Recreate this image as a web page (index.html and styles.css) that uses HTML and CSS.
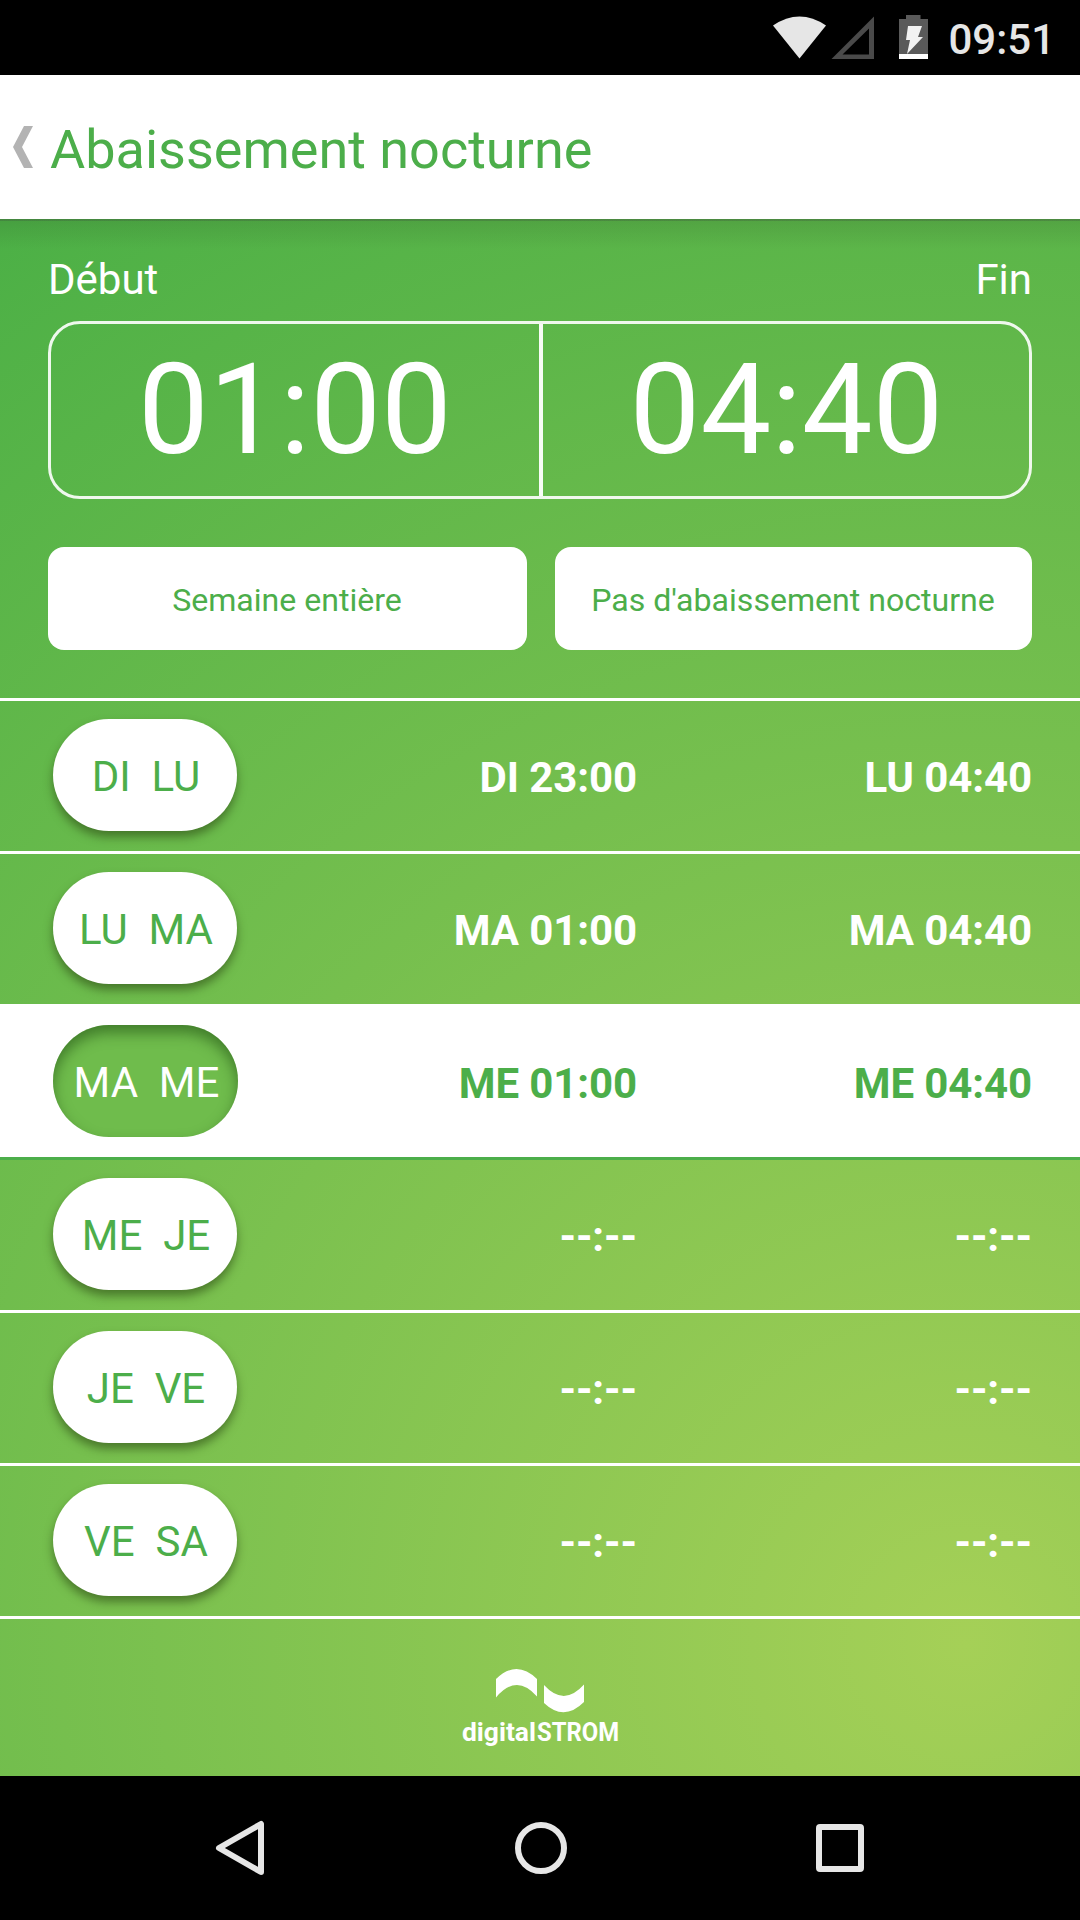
FILE: index.html
```html
<!DOCTYPE html>
<html lang="fr">
<head>
<meta charset="utf-8">
<title>Abaissement nocturne</title>
<link rel="stylesheet" href="styles.css">
</head>
<body>
<div class="status">
  <svg class="status-icons" width="164" height="74" viewBox="772 0 164 74">
    <path d="M773 25.500Q799.500 7.500 826 25.500L799.500 58.500Z" fill="#e6e6e6"/>
    <path d="M874 16.500V59H831.500ZM869 28.500L842.500 54.500H869Z" fill="#4a4a4a" fill-rule="evenodd"/>
    <path d="M906 15h14.500v4H928v35h-29V19h7Z" fill="#5a5a5a"/>
    <path d="M899 54h29v5h-29Z" fill="#fff"/>
    <path d="M908 26h14l-4 11h5l-16 17 3-14h-4Z" fill="#f2f2f2"/>
  </svg>
  <span class="clock">09:51</span>
</div>
<header class="header">
  <svg class="back" width="20" height="42" viewBox="0 0 20 42"><path d="M11 0H20L9 21 20 42H11L0 21Z" fill="#b3b3b3"/></svg>
  <h1 class="title">Abaissement nocturne</h1>
</header>
<main class="content">
  <div class="labels"><span>Début</span><span>Fin</span></div>
  <div class="times">
    <div class="time">01:00</div>
    <div class="time">04:40</div>
  </div>
  <div class="buttons">
    <button class="button">Semaine entière</button>
    <button class="button">Pas d'abaissement nocturne</button>
  </div>
  <div class="rows">
    <div class="row"><span class="pill">DI&nbsp; LU</span><span class="from">DI 23:00</span><span class="to">LU 04:40</span></div>
    <div class="row"><span class="pill">LU&nbsp; MA</span><span class="from">MA 01:00</span><span class="to">MA 04:40</span></div>
    <div class="row selected"><span class="pill">MA&nbsp; ME</span><span class="from">ME 01:00</span><span class="to">ME 04:40</span></div>
    <div class="row after"><span class="pill">ME&nbsp; JE</span><span class="from">--:--</span><span class="to">--:--</span></div>
    <div class="row"><span class="pill">JE&nbsp; VE</span><span class="from">--:--</span><span class="to">--:--</span></div>
    <div class="row"><span class="pill">VE&nbsp; SA</span><span class="from">--:--</span><span class="to">--:--</span></div>
  </div>
  <footer class="footer">
    <svg width="180" height="90" viewBox="450 1666 180 90" fill="#fff">
      <path d="M496 1679Q516.500 1659 537 1679V1696.500Q516.500 1673 496 1697.500Z"/>
      <path d="M544 1685Q564 1707 584 1684.500V1702Q564 1722 544 1703Z"/>
      <text class="brand" x="462" y="1741" textLength="74" lengthAdjust="spacingAndGlyphs">digital</text>
      <text class="brand" x="537" y="1741" textLength="82" lengthAdjust="spacingAndGlyphs">STROM</text>
    </svg>
  </footer>
</main>
<nav class="nav">
  <svg width="50" height="56" viewBox="0 0 50 56"><path d="M4 28L46 4V52Z"/></svg>
  <svg width="52" height="52" viewBox="0 0 52 52"><circle cx="26" cy="26" r="23"/></svg>
  <svg width="48" height="48" viewBox="0 0 48 48"><rect x="3" y="3" width="42" height="42" rx="1"/></svg>
</nav>
</body>
</html>
```
FILE: styles.css
```css
* { box-sizing: border-box; }
body {
  margin: 0;
  width: 1080px;
  height: 1920px;
  display: flex;
  flex-direction: column;
  overflow: hidden;
  font-family: Roboto, sans-serif;
  background: #000;
}
svg { display: block; flex: none; }

.status {
  height: 75px;
  padding-right: 25px;
  display: flex;
  justify-content: flex-end;
}
.clock {
  margin-left: 12px;
  line-height: 79px;
  font-size: 42px;
  font-weight: 500;
  color: #e6e6e6;
}

.header {
  height: 144px;
  padding-left: 13px;
  display: flex;
  align-items: center;
  background: #fff;
}
.title {
  margin: 4px 0 0 17px;
  font-size: 54px;
  font-weight: 400;
  color: #4cae4a;
}

.content {
  height: 1557px;
  padding-top: 36px;
  background:
    linear-gradient(rgba(60, 80, 60, .3), rgba(60, 80, 60, .3)) 0 0 / 100% 2px no-repeat,
    linear-gradient(rgba(50, 90, 40, .2), rgba(50, 90, 40, 0)) 0 0 / 100% 30px no-repeat,
    radial-gradient(circle 1710px at 965px 1425px, #a5d057, #4cb046);
}
.labels {
  height: 50px;
  padding: 0 48px;
  display: flex;
  justify-content: space-between;
  line-height: 50px;
  font-size: 42px;
  color: #fff;
}
.times {
  height: 178px;
  margin: 16px 48px 0;
  display: flex;
  border: 3px solid rgba(255, 255, 255, .9);
  border-radius: 32px;
}
.time {
  flex: 1;
  line-height: 172px;
  padding-left: 1px;
  font-size: 126px;
  text-align: center;
  color: #fff;
}
.time:first-child {
  flex: 0 0 492px;
  padding-left: 0;
  border-right: 4px solid rgba(255, 255, 255, .95);
}

.buttons {
  height: 103px;
  margin: 48px 48px;
  display: grid;
  grid-template-columns: 479px 477px;
  gap: 28px;
}
.button {
  padding: 3px 1px 0 0;
  border: 0;
  border-radius: 16px;
  background: #fff;
  font: 32.1px Roboto, sans-serif;
  white-space: nowrap;
  color: #4cae4a;
}

.rows { border-bottom: 3px solid #fff; }
.row {
  height: 153px;
  padding: 0 48px 0 53px;
  display: flex;
  align-items: center;
  border-top: 3px solid #fff;
  font-size: 42px;
  font-weight: 700;
  letter-spacing: -.1px;
  line-height: 50px;
  color: #fff;
}
.row.selected { background: #fff; color: #4cae4a; }
.row.after { border-top-color: #4cae4a; }
.pill {
  width: 184px;
  height: 112px;
  flex: none;
  margin-bottom: 2px;
  padding-left: 2px;
  border-radius: 56px;
  background: #fff;
  box-shadow: 0 6px 10px rgba(45, 75, 20, .6);
  line-height: 115px;
  text-align: center;
  font-weight: 400;
  letter-spacing: 0;
  color: #4cae4a;
}
.selected .pill {
  width: 185px;
  margin-right: -1px;
  background: #6fbc4c;
  box-shadow: inset 0 8px 14px rgba(40, 90, 25, .65);
  color: #fff;
}
.from { width: 400px; padding-top: 4px; text-align: right; }
.to { flex: 1; padding-top: 4px; text-align: right; }

.footer {
  padding-top: 47px;
  display: flex;
  justify-content: center;
}
.brand { font: 700 26px Roboto, sans-serif; }

.nav {
  height: 144px;
  padding: 0 216px 0 215px;
  display: flex;
  align-items: center;
  justify-content: space-between;
  fill: none;
  stroke: #e6e6e6;
  stroke-width: 6;
  stroke-linejoin: round;
}
```
